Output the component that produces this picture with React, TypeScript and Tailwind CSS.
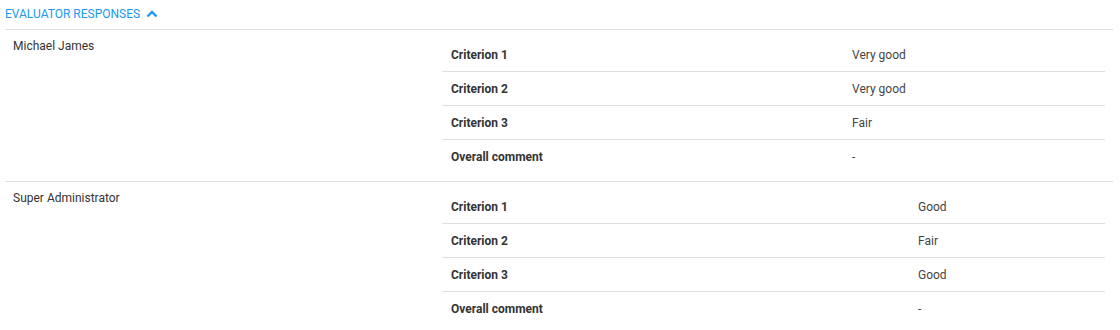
const responses = [
  {
    evaluator: "Michael James",
    valueCol: "w-[261px]",
    answers: [
      { label: "Criterion 1", value: "Very good" },
      { label: "Criterion 2", value: "Very good" },
      { label: "Criterion 3", value: "Fair" },
      { label: "Overall comment", value: "-" },
    ],
  },
  {
    evaluator: "Super Administrator",
    valueCol: "w-[195px]",
    answers: [
      { label: "Criterion 1", value: "Good" },
      { label: "Criterion 2", value: "Fair" },
      { label: "Criterion 3", value: "Good" },
      { label: "Overall comment", value: "-" },
    ],
  },
];

function ChevronUp() {
  return (
    <svg width="12" height="8" viewBox="0 0 12 8" className="ml-[6px]">
      <path
        d="M1.5 6.5 L6 2 L10.5 6.5"
        fill="none"
        stroke="#2196f3"
        strokeWidth="2.4"
      />
    </svg>
  );
}

export default function App() {
  return (
    <div
      className="w-[1120px] bg-white pl-[5px] text-[12px] text-[#333]"
      style={{ fontFamily: "Roboto, 'Liberation Sans', sans-serif" }}
    >
      <div className="w-[1108px]">
        <button
          type="button"
          className="flex h-[29px] items-center pb-[2px] uppercase text-[#2196f3]"
        >
          Evaluator responses
          <ChevronUp />
        </button>

        {responses.map((response) => (
          <div
            key={response.evaluator}
            className="flex border-t border-[#e0e0e0]"
          >
            <div className="w-[429px] px-2 pt-[9px] leading-[14px]">
              {response.evaluator}
            </div>

            <div className="flex-1 px-2 pt-2 pb-[7px]">
              {response.answers.map((answer, i) => (
                <div
                  key={answer.label}
                  className={`flex h-[34px] items-center ${
                    i < response.answers.length - 1
                      ? "border-b border-[#e0e0e0]"
                      : ""
                  }`}
                >
                  <div className="flex-1 pl-[9px] font-bold">
                    {answer.label}
                  </div>
                  <div className={`${response.valueCol} pl-2 text-[#444]`}>
                    {answer.value}
                  </div>
                </div>
              ))}
            </div>
          </div>
        ))}
      </div>
    </div>
  );
}
